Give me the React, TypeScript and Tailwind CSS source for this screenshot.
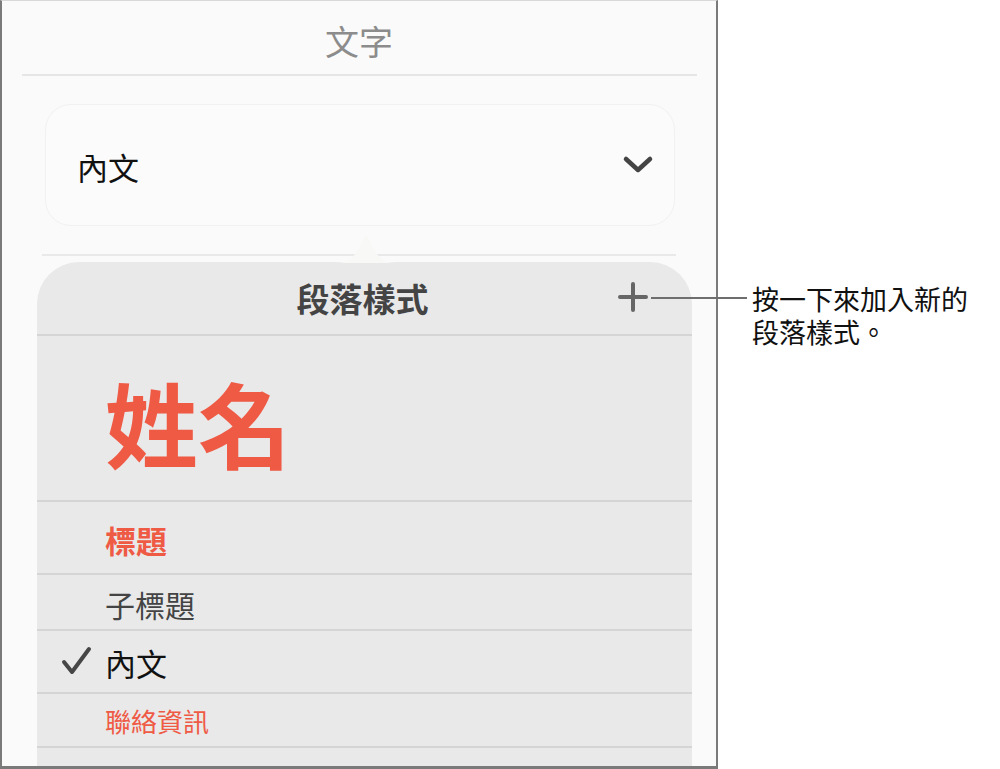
import React from 'react';

const cjk = { fontFamily: '"Noto Sans CJK TC", "Noto Sans", sans-serif' };
const callout = { fontFamily: '"Liberation Sans", "Noto Sans CJK TC", sans-serif' };

const Check = () => (
  <svg width="32" height="30" viewBox="0 0 32 30" className="shrink-0">
    <path d="M3 16 L11 26 L28 3" fill="none" stroke="#464646" strokeWidth="4" strokeLinecap="round" strokeLinejoin="round" />
  </svg>
);

const Chevron = () => (
  <svg width="32" height="20" viewBox="0 0 32 20">
    <path d="M4 4 L16 15 L28 4" fill="none" stroke="#444" strokeWidth="4.5" strokeLinecap="round" strokeLinejoin="round" />
  </svg>
);

const Plus = () => (
  <svg width="32" height="32" viewBox="0 0 32 32">
    <path d="M16 3 V29 M3 16 H29" fill="none" stroke="#666" strokeWidth="4" strokeLinecap="round" />
  </svg>
);

const Divider = () => <div className="h-[2px] bg-[#d5d5d5]" />;

const styles = [
  { name: '標題', h: 'h-[71px]', pt: 'pt-[22px]', text: 'text-[31px] font-bold text-[#ef5a45]' },
  { name: '子標題', h: 'h-[54px]', pt: 'pt-[14px]', text: 'text-[30px] text-[#444]' },
  { name: '內文', h: 'h-[61px]', pt: 'pt-[16px]', text: 'text-[31px] text-[#111]', checked: true },
  { name: '聯絡資訊', h: 'h-[52px]', pt: 'pt-[14px]', text: 'text-[26px] text-[#ef5a45]' },
];

export default function App() {
  return (
    <div className="w-[1000px] h-[769px] bg-white flex" style={cjk}>
      {/* phone screen */}
      <div className="relative w-[718px] h-[769px] bg-[#fafafa] border-l-2 border-r-2 border-b-[3px] border-t border-l-[#7a7a7a] border-r-[#7a7a7a] border-b-[#7a7a7a] border-t-[#d8d8d8] flex flex-col">
        <div className="h-[73px] flex items-center justify-center pt-[7px]">
          <span className="text-[34px] leading-none text-[#8c8c8c]">文字</span>
        </div>
        <div className="h-[2px] bg-[#e6e6e6] ml-[20px] mr-[19px]" />

        {/* current style picker */}
        <div className="mt-[28px] ml-[43px] mr-[41px] h-[122px] rounded-[26px] bg-[#fbfbfb] border border-[#f1f1f1] flex items-center justify-between pl-[31px] pr-[20px]">
          <span className="text-[31px] leading-none text-[#111] pt-[2px]">內文</span>
          <Chevron />
        </div>

        <div className="mt-[28px] h-[2px] bg-[#e9e9e9] ml-[40px] mr-[40px]" />

        {/* popover arrow */}
        <svg className="absolute left-[333px] top-[232px]" width="62" height="31" viewBox="0 0 62 31">
          <path d="M0 30 C14 30 18 25 24 15 C28 8 29 3 31 3 C33 3 34 8 38 15 C44 25 48 30 62 30 Z" fill="#f8f8f6" />
        </svg>

        {/* paragraph styles popover */}
        <div className="mt-[6px] ml-[35px] mr-[24px] flex-1 bg-[#e9e9e9] rounded-t-[42px] flex flex-col overflow-hidden">
          <div className="h-[72px] relative flex items-center justify-center">
            <span className="text-[33px] font-bold leading-none text-[#444] -ml-[4px]">段落樣式</span>
            <div className="absolute right-[43px] top-[19px]">
              <Plus />
            </div>
          </div>
          <Divider />
          <div className="h-[164px] pl-[68px] pt-[39px]">
            <span className="text-[93px] font-bold leading-none text-[#ef5a45]">姓名</span>
          </div>
          <Divider />
          {styles.map((s) => (
            <React.Fragment key={s.name}>
              <div className={`${s.h} ${s.pt} relative pl-[68px]`}>
                {s.checked && (
                  <div className="absolute left-[24px] top-[15px]">
                    <Check />
                  </div>
                )}
                <span className={`${s.text} leading-none`}>{s.name}</span>
              </div>
              <Divider />
            </React.Fragment>
          ))}
        </div>
      </div>

      {/* callout */}
      <div className="relative flex-1">
        <div className="absolute -left-[67px] top-[297px] w-[96px] h-[2px] bg-[#6e6e6e]" />
        <div className="pl-[34px] pt-[285px] text-[27px] leading-[33px] text-[#111]" style={callout}>
          <div>按一下來加入新的</div>
          <div>段落樣式。</div>
        </div>
      </div>
    </div>
  );
}
